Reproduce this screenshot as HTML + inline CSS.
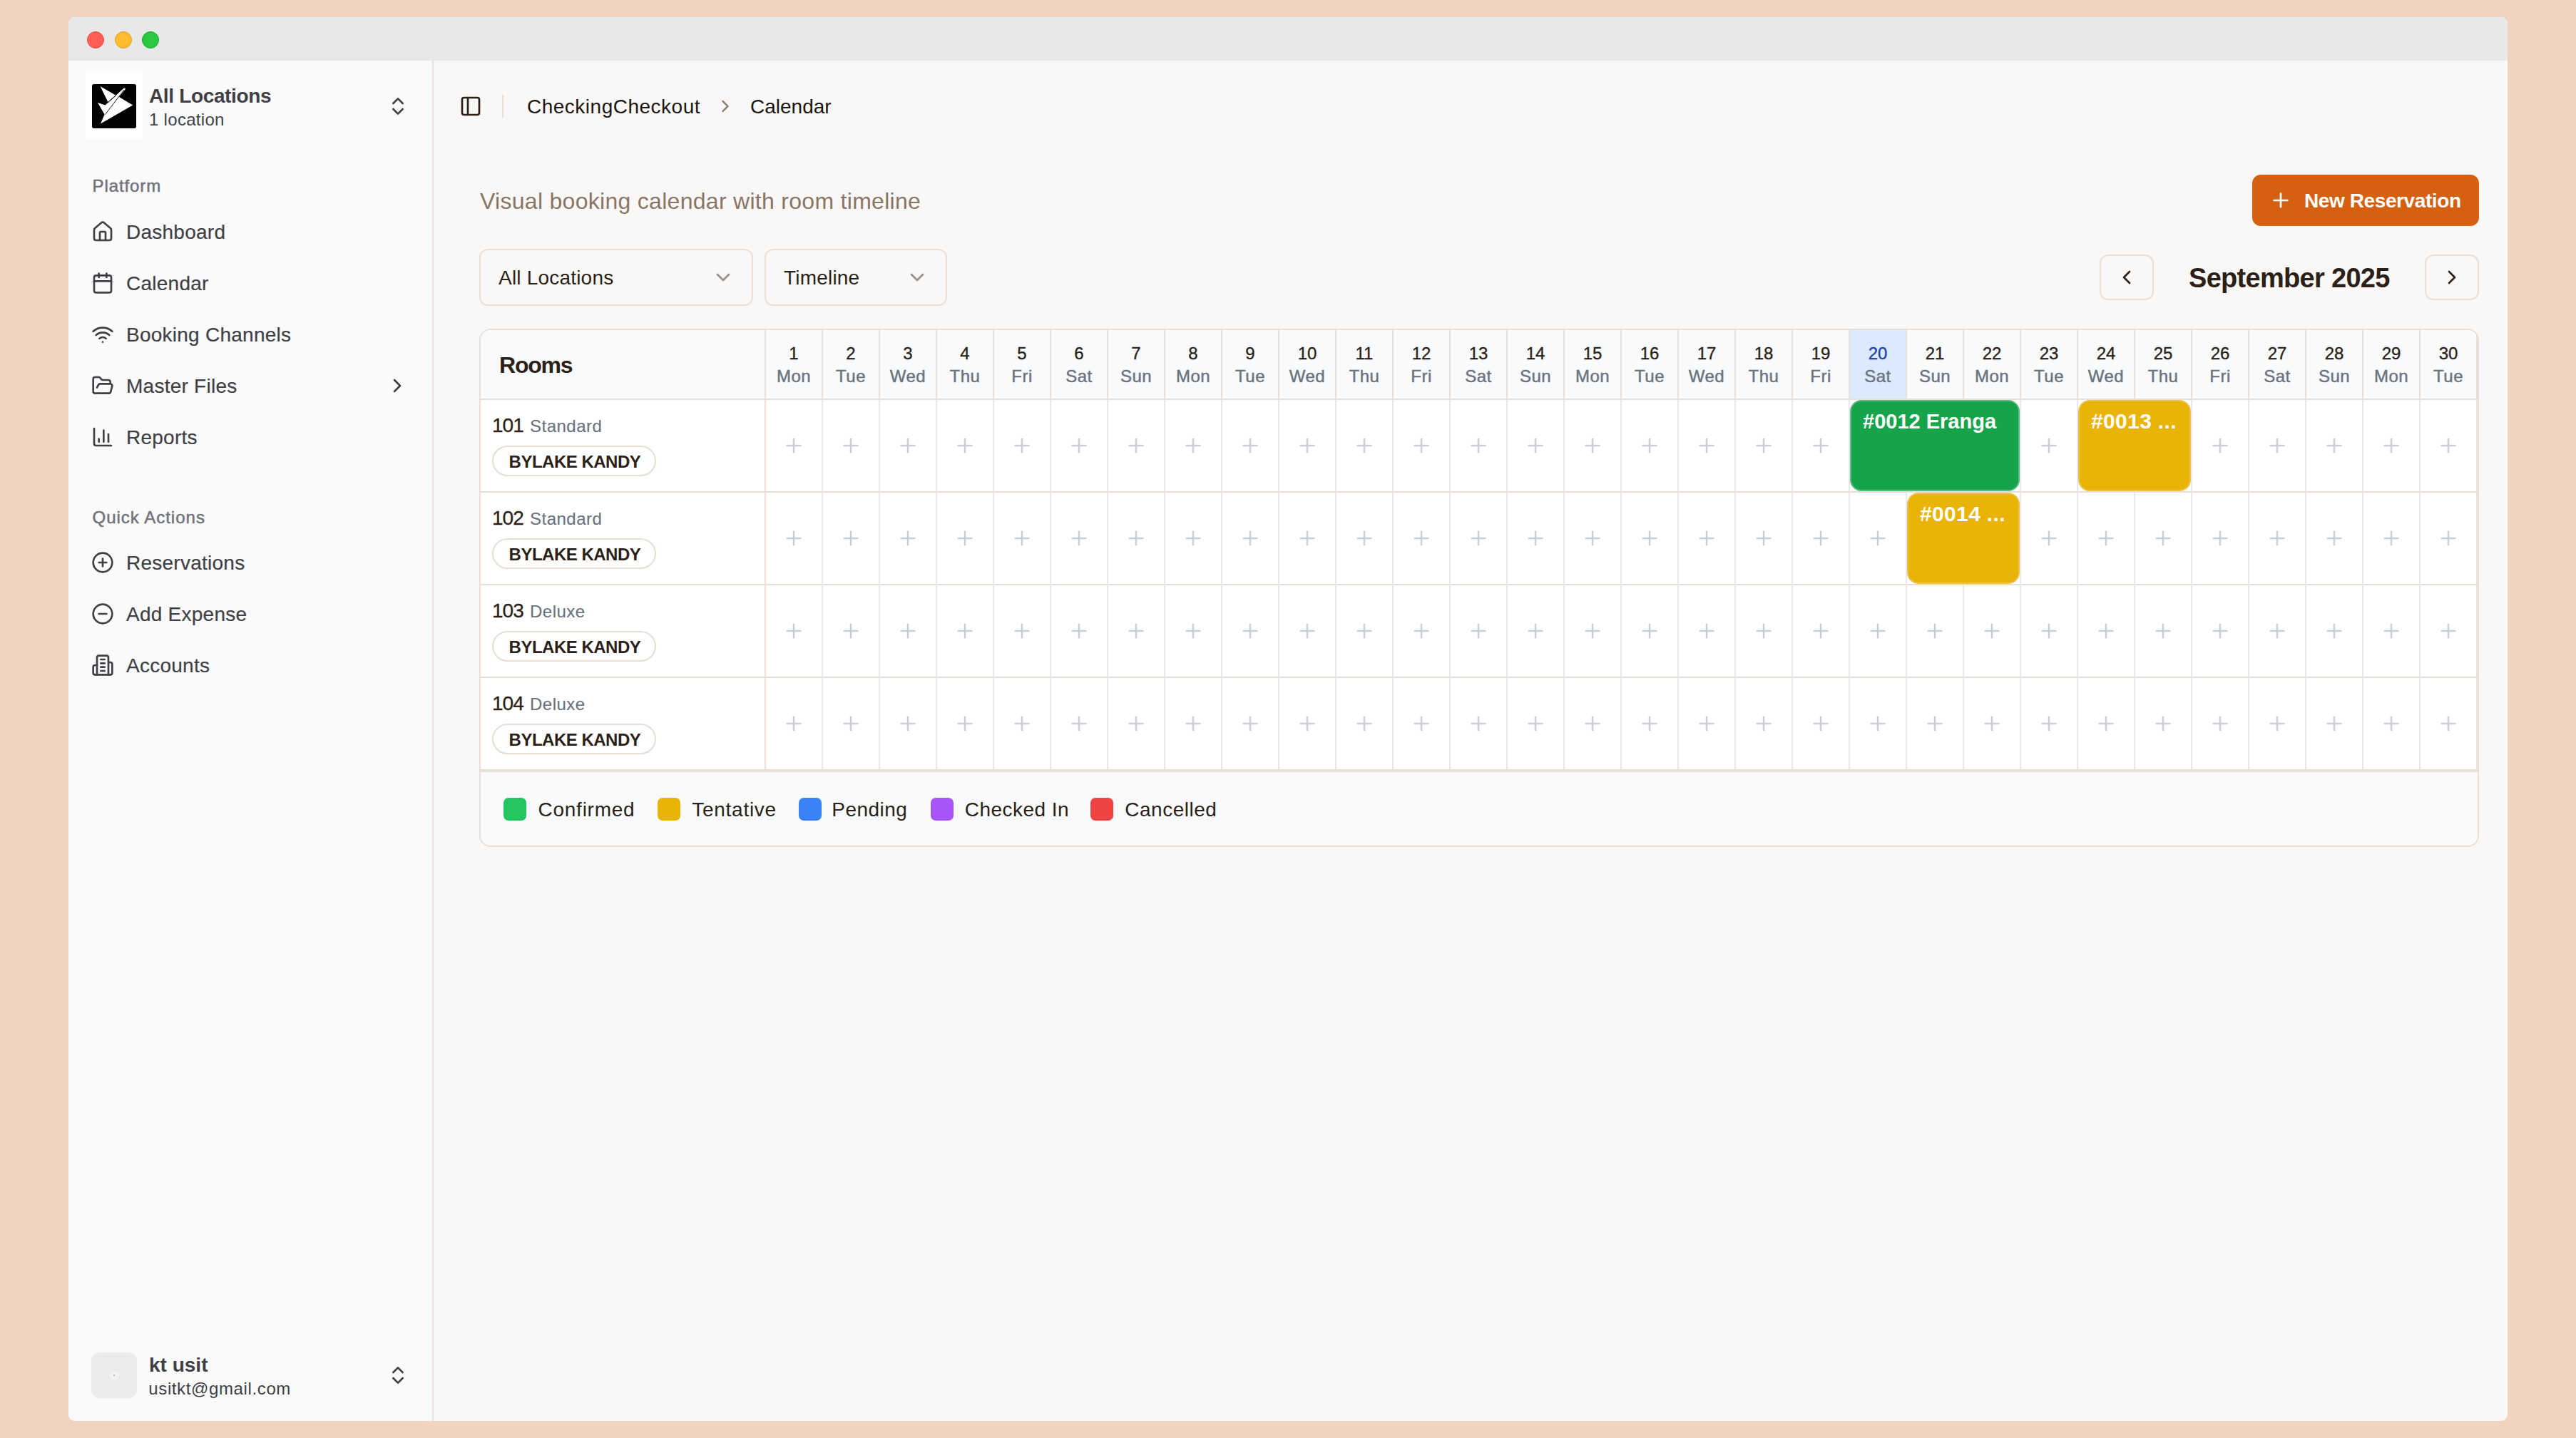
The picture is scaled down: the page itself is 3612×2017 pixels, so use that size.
<!DOCTYPE html><html><head><meta charset='utf-8'><style>
*{box-sizing:border-box;margin:0;padding:0}
html,body{width:3612px;height:2017px;overflow:hidden;background:#F2D3C1;font-family:"Liberation Sans",sans-serif}
.a{position:absolute}
.t{position:absolute;line-height:1;white-space:nowrap}
svg.i{position:absolute;fill:none;stroke:currentColor;stroke-linecap:round;stroke-linejoin:round;overflow:visible}
#win{position:absolute;left:96px;top:24px;width:3420px;height:1969px;border-radius:9px;overflow:hidden;background:#F9F8F7}
#titlebar{position:absolute;left:0;top:0;width:3420px;height:61px;background:#E8E8E8}
.dot{position:absolute;top:20px;width:24px;height:24px;border-radius:50%}
#sidebar{position:absolute;left:0;top:61px;width:512px;height:1908px;background:#FAFAFA;border-right:2px solid #EAE3DD}
</style></head><body>
<div id='win'>
<div id='titlebar'>
<div class='dot' style='left:26.2px;top:20px;background:#FF5F57;border:1px solid #E5493F'></div>
<div class='dot' style='left:64.8px;top:20px;background:#FEBC2E;border:1px solid #E1A024'></div>
<div class='dot' style='left:103px;top:20px;background:#28C840;border:1px solid #19A92E'></div>
</div>
<div id='sidebar'></div>
</div>
<div class='a' style='left:120px;top:101px;width:80px;height:95px;background:#FFFFFF'></div>
<div class='a' style='left:129px;top:118px;width:62px;height:62px;background:#000;border-radius:3px;overflow:hidden'><svg width='62' height='62' viewBox='0 0 62 62' style='position:absolute;left:0;top:0'><path d='M11.5 3 L33 15.4 L22.4 25 Z' fill='#fff'/><path d='M8 26 L18.5 29.5 L44.5 5.8 Q47.5 4.5 46.5 7.5 L38 18 L57.2 29.5 L12 55.5 L17.6 42.6 Z' fill='#fff'/><path d='M18.5 42.5 L45 8' stroke='#000' stroke-width='0.9' fill='none'/><path d='M22.5 25.8 L33.5 16' stroke='#000' stroke-width='0.9' fill='none'/></svg></div>
<div class='t' style='left:209px;top:121.30px;font-size:28px;color:#3F3F46;font-weight:700;letter-spacing:-0.35px;'>All Locations</div>
<div class='t' style='left:209px;top:155.68px;font-size:24px;color:#3F3F46;font-weight:400;letter-spacing:0.3px;'>1 location</div>
<svg class='i' style='left:542.0px;top:133.0px;width:32px;height:32px;color:#3F3F46;' viewBox='0 0 24 24' stroke-width='2'><path d="m7 15 5 5 5-5"/><path d="m7 9 5-5 5 5"/></svg>
<div class='t' style='left:129.5px;top:249.28px;font-size:24px;color:#71717A;font-weight:400;letter-spacing:0.9px;-webkit-text-stroke:0.5px currentColor;'>Platform</div>
<svg class='i' style='left:127.5px;top:309.0px;width:32px;height:32px;color:#3F3F46;' viewBox='0 0 24 24' stroke-width='2'><path d="M15 21v-8a1 1 0 0 0-1-1h-4a1 1 0 0 0-1 1v8"/><path d="M3 10a2 2 0 0 1 .709-1.528l7-5.999a2 2 0 0 1 2.582 0l7 5.999A2 2 0 0 1 21 10v9a2 2 0 0 1-2 2H5a2 2 0 0 1-2-2z"/></svg>
<div class='t' style='left:177px;top:312.30px;font-size:28px;color:#3F3F46;font-weight:400;letter-spacing:0.25px;-webkit-text-stroke:0.2px currentColor;'>Dashboard</div>
<svg class='i' style='left:127.5px;top:381.0px;width:32px;height:32px;color:#3F3F46;' viewBox='0 0 24 24' stroke-width='2'><path d="M8 2v4"/><path d="M16 2v4"/><rect width="18" height="18" x="3" y="4" rx="2"/><path d="M3 10h18"/></svg>
<div class='t' style='left:177px;top:384.30px;font-size:28px;color:#3F3F46;font-weight:400;letter-spacing:0.25px;-webkit-text-stroke:0.2px currentColor;'>Calendar</div>
<svg class='i' style='left:127.5px;top:453.0px;width:32px;height:32px;color:#3F3F46;' viewBox='0 0 24 24' stroke-width='2'><path d="M12 20h.01"/><path d="M2 8.82a15 15 0 0 1 20 0"/><path d="M5 12.859a10 10 0 0 1 14 0"/><path d="M8.5 16.429a5 5 0 0 1 7 0"/></svg>
<div class='t' style='left:177px;top:456.30px;font-size:28px;color:#3F3F46;font-weight:400;letter-spacing:0.25px;-webkit-text-stroke:0.2px currentColor;'>Booking Channels</div>
<svg class='i' style='left:127.5px;top:525.0px;width:32px;height:32px;color:#3F3F46;' viewBox='0 0 24 24' stroke-width='2'><path d="m6 14 1.5-2.9A2 2 0 0 1 9.24 10H20a2 2 0 0 1 1.94 2.5l-1.54 6a2 2 0 0 1-1.95 1.5H4a2 2 0 0 1-2-2V5a2 2 0 0 1 2-2h3.9a2 2 0 0 1 1.69.9l.81 1.2a2 2 0 0 0 1.67.9H18a2 2 0 0 1 2 2v2"/></svg>
<div class='t' style='left:177px;top:528.30px;font-size:28px;color:#3F3F46;font-weight:400;letter-spacing:0.25px;-webkit-text-stroke:0.2px currentColor;'>Master Files</div>
<svg class='i' style='left:127.5px;top:597.0px;width:32px;height:32px;color:#3F3F46;' viewBox='0 0 24 24' stroke-width='2'><path d="M3 3v16a2 2 0 0 0 2 2h16"/><path d="M18 17V9"/><path d="M13 17V5"/><path d="M8 17v-3"/></svg>
<div class='t' style='left:177px;top:600.30px;font-size:28px;color:#3F3F46;font-weight:400;letter-spacing:0.25px;-webkit-text-stroke:0.2px currentColor;'>Reports</div>
<svg class='i' style='left:541.0px;top:525.0px;width:32px;height:32px;color:#3F3F46;' viewBox='0 0 24 24' stroke-width='2'><path d="m9 18 6-6-6-6"/></svg>
<div class='t' style='left:129.5px;top:713.88px;font-size:24px;color:#71717A;font-weight:400;letter-spacing:1.0px;-webkit-text-stroke:0.5px currentColor;'>Quick Actions</div>
<svg class='i' style='left:127.5px;top:773.0px;width:32px;height:32px;color:#3F3F46;' viewBox='0 0 24 24' stroke-width='2'><circle cx="12" cy="12" r="10"/><path d="M8 12h8"/><path d="M12 8v8"/></svg>
<div class='t' style='left:177px;top:776.30px;font-size:28px;color:#3F3F46;font-weight:400;letter-spacing:0.25px;-webkit-text-stroke:0.2px currentColor;'>Reservations</div>
<svg class='i' style='left:127.5px;top:845.0px;width:32px;height:32px;color:#3F3F46;' viewBox='0 0 24 24' stroke-width='2'><circle cx="12" cy="12" r="10"/><path d="M8 12h8"/></svg>
<div class='t' style='left:177px;top:848.30px;font-size:28px;color:#3F3F46;font-weight:400;letter-spacing:0.25px;-webkit-text-stroke:0.2px currentColor;'>Add Expense</div>
<svg class='i' style='left:127.5px;top:917.0px;width:32px;height:32px;color:#3F3F46;' viewBox='0 0 24 24' stroke-width='2'><path d="M6 22V4a2 2 0 0 1 2-2h8a2 2 0 0 1 2 2v18Z"/><path d="M6 12H4a2 2 0 0 0-2 2v6a2 2 0 0 0 2 2h2"/><path d="M18 9h2a2 2 0 0 1 2 2v9a2 2 0 0 1-2 2h-2"/><path d="M10 6h4"/><path d="M10 10h4"/><path d="M10 14h4"/><path d="M10 18h4"/></svg>
<div class='t' style='left:177px;top:920.30px;font-size:28px;color:#3F3F46;font-weight:400;letter-spacing:0.25px;-webkit-text-stroke:0.2px currentColor;'>Accounts</div>
<div class='a' style='left:128px;top:1897px;width:64px;height:64px;border-radius:12px;background:#EBEBEB'></div>
<div class='a' style='left:153.5px;top:1922.5px;width:13px;height:13px;border-radius:50%;background:#F2F2F2'></div><div class='a' style='left:158.8px;top:1927.8px;width:2.4px;height:2.4px;border-radius:50%;background:#9A9A9A'></div>
<div class='t' style='left:209px;top:1901.30px;font-size:28px;color:#3F3F46;font-weight:700;'>kt usit</div>
<div class='t' style='left:208.3px;top:1935.68px;font-size:24px;color:#3F3F46;font-weight:400;letter-spacing:0.62px;'>usitkt@gmail.com</div>
<svg class='i' style='left:542.0px;top:1913.0px;width:32px;height:32px;color:#3F3F46;' viewBox='0 0 24 24' stroke-width='2'><path d="m7 15 5 5 5-5"/><path d="m7 9 5-5 5 5"/></svg>
<svg class='i' style='left:644.0px;top:133.0px;width:32px;height:32px;color:#2B1F18;' viewBox='0 0 24 24' stroke-width='2'><rect width="18" height="18" x="3" y="3" rx="2"/><path d="M9 3v18"/></svg>
<div class='a' style='left:704px;top:133px;width:2px;height:32px;background:#E8E0D8'></div>
<div class='t' style='left:739px;top:135.70px;font-size:28px;color:#1C1512;font-weight:400;letter-spacing:0.5px;'>CheckingCheckout</div>
<svg class='i' style='left:1003.0px;top:135.0px;width:28px;height:28px;color:#8B7768;' viewBox='0 0 24 24' stroke-width='2'><path d="m9 18 6-6-6-6"/></svg>
<div class='t' style='left:1052px;top:135.70px;font-size:28px;color:#1C1512;font-weight:400;'>Calendar</div>
<div class='t' style='left:673px;top:266.41px;font-size:32px;color:#8A7565;font-weight:400;letter-spacing:0.29px;'>Visual booking calendar with room timeline</div>
<div class='a' style='left:672px;top:349px;width:384px;height:80px;border:2px solid #E8E0D9;border-radius:12px'></div>
<div class='t' style='left:699px;top:376.30px;font-size:28px;color:#2B1F18;font-weight:400;letter-spacing:0.2px;'>All Locations</div>
<svg class='i' style='left:998.0px;top:373.0px;width:32px;height:32px;color:#9A9088;' viewBox='0 0 24 24' stroke-width='2'><path d="m6 9 6 6 6-6"/></svg>
<div class='a' style='left:1072px;top:349px;width:256px;height:80px;border:2px solid #E8E0D9;border-radius:12px'></div>
<div class='t' style='left:1099px;top:376.30px;font-size:28px;color:#2B1F18;font-weight:400;letter-spacing:0.2px;'>Timeline</div>
<svg class='i' style='left:1269.5px;top:373.0px;width:32px;height:32px;color:#9A9088;' viewBox='0 0 24 24' stroke-width='2'><path d="m6 9 6 6 6-6"/></svg>
<div class='a' style='left:3158px;top:245px;width:318px;height:72px;border-radius:12px;background:#D5600F'></div>
<svg class='i' style='left:3182.0px;top:265.0px;width:32px;height:32px;color:#FFFFFF;' viewBox='0 0 24 24' stroke-width='2'><path d="M5 12h14"/><path d="M12 5v14"/></svg>
<div class='t' style='left:3231px;top:268.30px;font-size:28px;color:#FFFFFF;font-weight:700;letter-spacing:-0.4px;'>New Reservation</div>
<div class='a' style='left:2944px;top:357px;width:76px;height:64px;border:2px solid #E8E0D9;border-radius:12px'></div>
<div class='a' style='left:3400px;top:357px;width:76px;height:64px;border:2px solid #E8E0D9;border-radius:12px'></div>
<svg class='i' style='left:2966.0px;top:373.0px;width:32px;height:32px;color:#2B1F18;' viewBox='0 0 24 24' stroke-width='2'><path d="m15 18-6-6 6-6"/></svg>
<svg class='i' style='left:3422.0px;top:373.0px;width:32px;height:32px;color:#2B1F18;' viewBox='0 0 24 24' stroke-width='2'><path d="m9 18 6-6-6-6"/></svg>
<div class='t' style='left:3069px;top:370.83px;font-size:38px;color:#2B1F18;font-weight:700;letter-spacing:-0.7px;'>September 2025</div>
<div class='a' style='left:672px;top:461px;width:2804px;height:727px;border:2px solid #E8E0D8;border-radius:16px;overflow:hidden;background:#FFFFFF'><div class='a' style='left:0px;top:0px;width:2800px;height:96px;background:#F8FAFC;'></div><div class='a' style='left:1920px;top:0px;width:78px;height:96px;background:#DBEAFE;'></div><div class='a' style='left:398px;top:0px;width:2px;height:616px;background:#E8E0D8;'></div><div class='a' style='left:478px;top:0px;width:2px;height:96px;background:#E8E0D8;'></div><div class='a' style='left:478px;top:98px;width:2px;height:518px;background:#E5E7EB;'></div><div class='a' style='left:558px;top:0px;width:2px;height:96px;background:#E8E0D8;'></div><div class='a' style='left:558px;top:98px;width:2px;height:518px;background:#E5E7EB;'></div><div class='a' style='left:638px;top:0px;width:2px;height:96px;background:#E8E0D8;'></div><div class='a' style='left:638px;top:98px;width:2px;height:518px;background:#E5E7EB;'></div><div class='a' style='left:718px;top:0px;width:2px;height:96px;background:#E8E0D8;'></div><div class='a' style='left:718px;top:98px;width:2px;height:518px;background:#E5E7EB;'></div><div class='a' style='left:798px;top:0px;width:2px;height:96px;background:#E8E0D8;'></div><div class='a' style='left:798px;top:98px;width:2px;height:518px;background:#E5E7EB;'></div><div class='a' style='left:878px;top:0px;width:2px;height:96px;background:#E8E0D8;'></div><div class='a' style='left:878px;top:98px;width:2px;height:518px;background:#E5E7EB;'></div><div class='a' style='left:958px;top:0px;width:2px;height:96px;background:#E8E0D8;'></div><div class='a' style='left:958px;top:98px;width:2px;height:518px;background:#E5E7EB;'></div><div class='a' style='left:1038px;top:0px;width:2px;height:96px;background:#E8E0D8;'></div><div class='a' style='left:1038px;top:98px;width:2px;height:518px;background:#E5E7EB;'></div><div class='a' style='left:1118px;top:0px;width:2px;height:96px;background:#E8E0D8;'></div><div class='a' style='left:1118px;top:98px;width:2px;height:518px;background:#E5E7EB;'></div><div class='a' style='left:1198px;top:0px;width:2px;height:96px;background:#E8E0D8;'></div><div class='a' style='left:1198px;top:98px;width:2px;height:518px;background:#E5E7EB;'></div><div class='a' style='left:1278px;top:0px;width:2px;height:96px;background:#E8E0D8;'></div><div class='a' style='left:1278px;top:98px;width:2px;height:518px;background:#E5E7EB;'></div><div class='a' style='left:1358px;top:0px;width:2px;height:96px;background:#E8E0D8;'></div><div class='a' style='left:1358px;top:98px;width:2px;height:518px;background:#E5E7EB;'></div><div class='a' style='left:1438px;top:0px;width:2px;height:96px;background:#E8E0D8;'></div><div class='a' style='left:1438px;top:98px;width:2px;height:518px;background:#E5E7EB;'></div><div class='a' style='left:1518px;top:0px;width:2px;height:96px;background:#E8E0D8;'></div><div class='a' style='left:1518px;top:98px;width:2px;height:518px;background:#E5E7EB;'></div><div class='a' style='left:1598px;top:0px;width:2px;height:96px;background:#E8E0D8;'></div><div class='a' style='left:1598px;top:98px;width:2px;height:518px;background:#E5E7EB;'></div><div class='a' style='left:1678px;top:0px;width:2px;height:96px;background:#E8E0D8;'></div><div class='a' style='left:1678px;top:98px;width:2px;height:518px;background:#E5E7EB;'></div><div class='a' style='left:1758px;top:0px;width:2px;height:96px;background:#E8E0D8;'></div><div class='a' style='left:1758px;top:98px;width:2px;height:518px;background:#E5E7EB;'></div><div class='a' style='left:1838px;top:0px;width:2px;height:96px;background:#E8E0D8;'></div><div class='a' style='left:1838px;top:98px;width:2px;height:518px;background:#E5E7EB;'></div><div class='a' style='left:1918px;top:0px;width:2px;height:96px;background:#E8E0D8;'></div><div class='a' style='left:1918px;top:98px;width:2px;height:518px;background:#E5E7EB;'></div><div class='a' style='left:1998px;top:0px;width:2px;height:96px;background:#E8E0D8;'></div><div class='a' style='left:1998px;top:98px;width:2px;height:518px;background:#E5E7EB;'></div><div class='a' style='left:2078px;top:0px;width:2px;height:96px;background:#E8E0D8;'></div><div class='a' style='left:2078px;top:98px;width:2px;height:518px;background:#E5E7EB;'></div><div class='a' style='left:2158px;top:0px;width:2px;height:96px;background:#E8E0D8;'></div><div class='a' style='left:2158px;top:98px;width:2px;height:518px;background:#E5E7EB;'></div><div class='a' style='left:2238px;top:0px;width:2px;height:96px;background:#E8E0D8;'></div><div class='a' style='left:2238px;top:98px;width:2px;height:518px;background:#E5E7EB;'></div><div class='a' style='left:2318px;top:0px;width:2px;height:96px;background:#E8E0D8;'></div><div class='a' style='left:2318px;top:98px;width:2px;height:518px;background:#E5E7EB;'></div><div class='a' style='left:2398px;top:0px;width:2px;height:96px;background:#E8E0D8;'></div><div class='a' style='left:2398px;top:98px;width:2px;height:518px;background:#E5E7EB;'></div><div class='a' style='left:2478px;top:0px;width:2px;height:96px;background:#E8E0D8;'></div><div class='a' style='left:2478px;top:98px;width:2px;height:518px;background:#E5E7EB;'></div><div class='a' style='left:2558px;top:0px;width:2px;height:96px;background:#E8E0D8;'></div><div class='a' style='left:2558px;top:98px;width:2px;height:518px;background:#E5E7EB;'></div><div class='a' style='left:2638px;top:0px;width:2px;height:96px;background:#E8E0D8;'></div><div class='a' style='left:2638px;top:98px;width:2px;height:518px;background:#E5E7EB;'></div><div class='a' style='left:2718px;top:0px;width:2px;height:96px;background:#E8E0D8;'></div><div class='a' style='left:2718px;top:98px;width:2px;height:518px;background:#E5E7EB;'></div><div class='a' style='left:2798px;top:0px;width:2px;height:96px;background:#E8E0D8;'></div><div class='a' style='left:2798px;top:98px;width:2px;height:518px;background:#E5E7EB;'></div><div class='a' style='left:0px;top:96px;width:2800px;height:2px;background:#E8E0D8;'></div><div class='a' style='left:0px;top:226px;width:2800px;height:2px;background:#E8E0D8;'></div><div class='a' style='left:0px;top:356px;width:2800px;height:2px;background:#E8E0D8;'></div><div class='a' style='left:0px;top:486px;width:2800px;height:2px;background:#E8E0D8;'></div><div class='a' style='left:0px;top:616px;width:2800px;height:4px;background:#E8E0D8;'></div><div class='a' style='left:0px;top:620px;width:2800px;height:105px;background:#F8FAFC;'></div></div>
<div class='t' style='left:1073.0px;width:80px;text-align:center;top:483.68px;font-size:24px;color:#2B1F18;font-weight:400;-webkit-text-stroke:0.35px currentColor;'>1</div>
<div class='t' style='left:1073.0px;width:80px;text-align:center;top:515.68px;font-size:24px;color:#6B7280;font-weight:400;letter-spacing:0.5px;-webkit-text-stroke:0.45px currentColor;'>Mon</div>
<div class='t' style='left:1153.0px;width:80px;text-align:center;top:483.68px;font-size:24px;color:#2B1F18;font-weight:400;-webkit-text-stroke:0.35px currentColor;'>2</div>
<div class='t' style='left:1153.0px;width:80px;text-align:center;top:515.68px;font-size:24px;color:#6B7280;font-weight:400;letter-spacing:0.5px;-webkit-text-stroke:0.45px currentColor;'>Tue</div>
<div class='t' style='left:1233.0px;width:80px;text-align:center;top:483.68px;font-size:24px;color:#2B1F18;font-weight:400;-webkit-text-stroke:0.35px currentColor;'>3</div>
<div class='t' style='left:1233.0px;width:80px;text-align:center;top:515.68px;font-size:24px;color:#6B7280;font-weight:400;letter-spacing:0.5px;-webkit-text-stroke:0.45px currentColor;'>Wed</div>
<div class='t' style='left:1313.0px;width:80px;text-align:center;top:483.68px;font-size:24px;color:#2B1F18;font-weight:400;-webkit-text-stroke:0.35px currentColor;'>4</div>
<div class='t' style='left:1313.0px;width:80px;text-align:center;top:515.68px;font-size:24px;color:#6B7280;font-weight:400;letter-spacing:0.5px;-webkit-text-stroke:0.45px currentColor;'>Thu</div>
<div class='t' style='left:1393.0px;width:80px;text-align:center;top:483.68px;font-size:24px;color:#2B1F18;font-weight:400;-webkit-text-stroke:0.35px currentColor;'>5</div>
<div class='t' style='left:1393.0px;width:80px;text-align:center;top:515.68px;font-size:24px;color:#6B7280;font-weight:400;letter-spacing:0.5px;-webkit-text-stroke:0.45px currentColor;'>Fri</div>
<div class='t' style='left:1473.0px;width:80px;text-align:center;top:483.68px;font-size:24px;color:#2B1F18;font-weight:400;-webkit-text-stroke:0.35px currentColor;'>6</div>
<div class='t' style='left:1473.0px;width:80px;text-align:center;top:515.68px;font-size:24px;color:#6B7280;font-weight:400;letter-spacing:0.5px;-webkit-text-stroke:0.45px currentColor;'>Sat</div>
<div class='t' style='left:1553.0px;width:80px;text-align:center;top:483.68px;font-size:24px;color:#2B1F18;font-weight:400;-webkit-text-stroke:0.35px currentColor;'>7</div>
<div class='t' style='left:1553.0px;width:80px;text-align:center;top:515.68px;font-size:24px;color:#6B7280;font-weight:400;letter-spacing:0.5px;-webkit-text-stroke:0.45px currentColor;'>Sun</div>
<div class='t' style='left:1633.0px;width:80px;text-align:center;top:483.68px;font-size:24px;color:#2B1F18;font-weight:400;-webkit-text-stroke:0.35px currentColor;'>8</div>
<div class='t' style='left:1633.0px;width:80px;text-align:center;top:515.68px;font-size:24px;color:#6B7280;font-weight:400;letter-spacing:0.5px;-webkit-text-stroke:0.45px currentColor;'>Mon</div>
<div class='t' style='left:1713.0px;width:80px;text-align:center;top:483.68px;font-size:24px;color:#2B1F18;font-weight:400;-webkit-text-stroke:0.35px currentColor;'>9</div>
<div class='t' style='left:1713.0px;width:80px;text-align:center;top:515.68px;font-size:24px;color:#6B7280;font-weight:400;letter-spacing:0.5px;-webkit-text-stroke:0.45px currentColor;'>Tue</div>
<div class='t' style='left:1793.0px;width:80px;text-align:center;top:483.68px;font-size:24px;color:#2B1F18;font-weight:400;-webkit-text-stroke:0.35px currentColor;'>10</div>
<div class='t' style='left:1793.0px;width:80px;text-align:center;top:515.68px;font-size:24px;color:#6B7280;font-weight:400;letter-spacing:0.5px;-webkit-text-stroke:0.45px currentColor;'>Wed</div>
<div class='t' style='left:1873.0px;width:80px;text-align:center;top:483.68px;font-size:24px;color:#2B1F18;font-weight:400;-webkit-text-stroke:0.35px currentColor;'>11</div>
<div class='t' style='left:1873.0px;width:80px;text-align:center;top:515.68px;font-size:24px;color:#6B7280;font-weight:400;letter-spacing:0.5px;-webkit-text-stroke:0.45px currentColor;'>Thu</div>
<div class='t' style='left:1953.0px;width:80px;text-align:center;top:483.68px;font-size:24px;color:#2B1F18;font-weight:400;-webkit-text-stroke:0.35px currentColor;'>12</div>
<div class='t' style='left:1953.0px;width:80px;text-align:center;top:515.68px;font-size:24px;color:#6B7280;font-weight:400;letter-spacing:0.5px;-webkit-text-stroke:0.45px currentColor;'>Fri</div>
<div class='t' style='left:2033.0px;width:80px;text-align:center;top:483.68px;font-size:24px;color:#2B1F18;font-weight:400;-webkit-text-stroke:0.35px currentColor;'>13</div>
<div class='t' style='left:2033.0px;width:80px;text-align:center;top:515.68px;font-size:24px;color:#6B7280;font-weight:400;letter-spacing:0.5px;-webkit-text-stroke:0.45px currentColor;'>Sat</div>
<div class='t' style='left:2113.0px;width:80px;text-align:center;top:483.68px;font-size:24px;color:#2B1F18;font-weight:400;-webkit-text-stroke:0.35px currentColor;'>14</div>
<div class='t' style='left:2113.0px;width:80px;text-align:center;top:515.68px;font-size:24px;color:#6B7280;font-weight:400;letter-spacing:0.5px;-webkit-text-stroke:0.45px currentColor;'>Sun</div>
<div class='t' style='left:2193.0px;width:80px;text-align:center;top:483.68px;font-size:24px;color:#2B1F18;font-weight:400;-webkit-text-stroke:0.35px currentColor;'>15</div>
<div class='t' style='left:2193.0px;width:80px;text-align:center;top:515.68px;font-size:24px;color:#6B7280;font-weight:400;letter-spacing:0.5px;-webkit-text-stroke:0.45px currentColor;'>Mon</div>
<div class='t' style='left:2273.0px;width:80px;text-align:center;top:483.68px;font-size:24px;color:#2B1F18;font-weight:400;-webkit-text-stroke:0.35px currentColor;'>16</div>
<div class='t' style='left:2273.0px;width:80px;text-align:center;top:515.68px;font-size:24px;color:#6B7280;font-weight:400;letter-spacing:0.5px;-webkit-text-stroke:0.45px currentColor;'>Tue</div>
<div class='t' style='left:2353.0px;width:80px;text-align:center;top:483.68px;font-size:24px;color:#2B1F18;font-weight:400;-webkit-text-stroke:0.35px currentColor;'>17</div>
<div class='t' style='left:2353.0px;width:80px;text-align:center;top:515.68px;font-size:24px;color:#6B7280;font-weight:400;letter-spacing:0.5px;-webkit-text-stroke:0.45px currentColor;'>Wed</div>
<div class='t' style='left:2433.0px;width:80px;text-align:center;top:483.68px;font-size:24px;color:#2B1F18;font-weight:400;-webkit-text-stroke:0.35px currentColor;'>18</div>
<div class='t' style='left:2433.0px;width:80px;text-align:center;top:515.68px;font-size:24px;color:#6B7280;font-weight:400;letter-spacing:0.5px;-webkit-text-stroke:0.45px currentColor;'>Thu</div>
<div class='t' style='left:2513.0px;width:80px;text-align:center;top:483.68px;font-size:24px;color:#2B1F18;font-weight:400;-webkit-text-stroke:0.35px currentColor;'>19</div>
<div class='t' style='left:2513.0px;width:80px;text-align:center;top:515.68px;font-size:24px;color:#6B7280;font-weight:400;letter-spacing:0.5px;-webkit-text-stroke:0.45px currentColor;'>Fri</div>
<div class='t' style='left:2593.0px;width:80px;text-align:center;top:483.68px;font-size:24px;color:#1E40AF;font-weight:400;-webkit-text-stroke:0.35px currentColor;'>20</div>
<div class='t' style='left:2593.0px;width:80px;text-align:center;top:515.68px;font-size:24px;color:#6B7280;font-weight:400;letter-spacing:0.5px;-webkit-text-stroke:0.45px currentColor;'>Sat</div>
<div class='t' style='left:2673.0px;width:80px;text-align:center;top:483.68px;font-size:24px;color:#2B1F18;font-weight:400;-webkit-text-stroke:0.35px currentColor;'>21</div>
<div class='t' style='left:2673.0px;width:80px;text-align:center;top:515.68px;font-size:24px;color:#6B7280;font-weight:400;letter-spacing:0.5px;-webkit-text-stroke:0.45px currentColor;'>Sun</div>
<div class='t' style='left:2753.0px;width:80px;text-align:center;top:483.68px;font-size:24px;color:#2B1F18;font-weight:400;-webkit-text-stroke:0.35px currentColor;'>22</div>
<div class='t' style='left:2753.0px;width:80px;text-align:center;top:515.68px;font-size:24px;color:#6B7280;font-weight:400;letter-spacing:0.5px;-webkit-text-stroke:0.45px currentColor;'>Mon</div>
<div class='t' style='left:2833.0px;width:80px;text-align:center;top:483.68px;font-size:24px;color:#2B1F18;font-weight:400;-webkit-text-stroke:0.35px currentColor;'>23</div>
<div class='t' style='left:2833.0px;width:80px;text-align:center;top:515.68px;font-size:24px;color:#6B7280;font-weight:400;letter-spacing:0.5px;-webkit-text-stroke:0.45px currentColor;'>Tue</div>
<div class='t' style='left:2913.0px;width:80px;text-align:center;top:483.68px;font-size:24px;color:#2B1F18;font-weight:400;-webkit-text-stroke:0.35px currentColor;'>24</div>
<div class='t' style='left:2913.0px;width:80px;text-align:center;top:515.68px;font-size:24px;color:#6B7280;font-weight:400;letter-spacing:0.5px;-webkit-text-stroke:0.45px currentColor;'>Wed</div>
<div class='t' style='left:2993.0px;width:80px;text-align:center;top:483.68px;font-size:24px;color:#2B1F18;font-weight:400;-webkit-text-stroke:0.35px currentColor;'>25</div>
<div class='t' style='left:2993.0px;width:80px;text-align:center;top:515.68px;font-size:24px;color:#6B7280;font-weight:400;letter-spacing:0.5px;-webkit-text-stroke:0.45px currentColor;'>Thu</div>
<div class='t' style='left:3073.0px;width:80px;text-align:center;top:483.68px;font-size:24px;color:#2B1F18;font-weight:400;-webkit-text-stroke:0.35px currentColor;'>26</div>
<div class='t' style='left:3073.0px;width:80px;text-align:center;top:515.68px;font-size:24px;color:#6B7280;font-weight:400;letter-spacing:0.5px;-webkit-text-stroke:0.45px currentColor;'>Fri</div>
<div class='t' style='left:3153.0px;width:80px;text-align:center;top:483.68px;font-size:24px;color:#2B1F18;font-weight:400;-webkit-text-stroke:0.35px currentColor;'>27</div>
<div class='t' style='left:3153.0px;width:80px;text-align:center;top:515.68px;font-size:24px;color:#6B7280;font-weight:400;letter-spacing:0.5px;-webkit-text-stroke:0.45px currentColor;'>Sat</div>
<div class='t' style='left:3233.0px;width:80px;text-align:center;top:483.68px;font-size:24px;color:#2B1F18;font-weight:400;-webkit-text-stroke:0.35px currentColor;'>28</div>
<div class='t' style='left:3233.0px;width:80px;text-align:center;top:515.68px;font-size:24px;color:#6B7280;font-weight:400;letter-spacing:0.5px;-webkit-text-stroke:0.45px currentColor;'>Sun</div>
<div class='t' style='left:3313.0px;width:80px;text-align:center;top:483.68px;font-size:24px;color:#2B1F18;font-weight:400;-webkit-text-stroke:0.35px currentColor;'>29</div>
<div class='t' style='left:3313.0px;width:80px;text-align:center;top:515.68px;font-size:24px;color:#6B7280;font-weight:400;letter-spacing:0.5px;-webkit-text-stroke:0.45px currentColor;'>Mon</div>
<div class='t' style='left:3393.0px;width:80px;text-align:center;top:483.68px;font-size:24px;color:#2B1F18;font-weight:400;-webkit-text-stroke:0.35px currentColor;'>30</div>
<div class='t' style='left:3393.0px;width:80px;text-align:center;top:515.68px;font-size:24px;color:#6B7280;font-weight:400;letter-spacing:0.5px;-webkit-text-stroke:0.45px currentColor;'>Tue</div>
<div class='t' style='left:700px;top:495.91px;font-size:32px;color:#2B1F18;font-weight:700;letter-spacing:-1.2px;'>Rooms</div>
<div class='t' style='left:690px;top:582.80px;font-size:28px;color:#2B1F18;font-weight:400;letter-spacing:-1.0px;-webkit-text-stroke:0.3px currentColor;'>101</div>
<div class='t' style='left:743px;top:586.18px;font-size:24px;color:#6B7280;font-weight:400;letter-spacing:0.5px;-webkit-text-stroke:0.15px currentColor;'>Standard</div>
<div class='a' style='left:690px;top:625px;width:230px;height:43px;border:2px solid #E6DED6;border-radius:22px;background:#fff'></div>
<div class='t' style='left:713.6px;top:635.68px;font-size:24px;color:#2B1F18;font-weight:700;letter-spacing:-0.5px;'>BYLAKE KANDY</div>
<svg class='i' style='left:1097.0px;top:609.0px;width:32px;height:32px;color:#C9CED6;' viewBox='0 0 24 24' stroke-width='1.9'><path d="M5 12h14"/><path d="M12 5v14"/></svg>
<svg class='i' style='left:1177.0px;top:609.0px;width:32px;height:32px;color:#C9CED6;' viewBox='0 0 24 24' stroke-width='1.9'><path d="M5 12h14"/><path d="M12 5v14"/></svg>
<svg class='i' style='left:1257.0px;top:609.0px;width:32px;height:32px;color:#C9CED6;' viewBox='0 0 24 24' stroke-width='1.9'><path d="M5 12h14"/><path d="M12 5v14"/></svg>
<svg class='i' style='left:1337.0px;top:609.0px;width:32px;height:32px;color:#C9CED6;' viewBox='0 0 24 24' stroke-width='1.9'><path d="M5 12h14"/><path d="M12 5v14"/></svg>
<svg class='i' style='left:1417.0px;top:609.0px;width:32px;height:32px;color:#C9CED6;' viewBox='0 0 24 24' stroke-width='1.9'><path d="M5 12h14"/><path d="M12 5v14"/></svg>
<svg class='i' style='left:1497.0px;top:609.0px;width:32px;height:32px;color:#C9CED6;' viewBox='0 0 24 24' stroke-width='1.9'><path d="M5 12h14"/><path d="M12 5v14"/></svg>
<svg class='i' style='left:1577.0px;top:609.0px;width:32px;height:32px;color:#C9CED6;' viewBox='0 0 24 24' stroke-width='1.9'><path d="M5 12h14"/><path d="M12 5v14"/></svg>
<svg class='i' style='left:1657.0px;top:609.0px;width:32px;height:32px;color:#C9CED6;' viewBox='0 0 24 24' stroke-width='1.9'><path d="M5 12h14"/><path d="M12 5v14"/></svg>
<svg class='i' style='left:1737.0px;top:609.0px;width:32px;height:32px;color:#C9CED6;' viewBox='0 0 24 24' stroke-width='1.9'><path d="M5 12h14"/><path d="M12 5v14"/></svg>
<svg class='i' style='left:1817.0px;top:609.0px;width:32px;height:32px;color:#C9CED6;' viewBox='0 0 24 24' stroke-width='1.9'><path d="M5 12h14"/><path d="M12 5v14"/></svg>
<svg class='i' style='left:1897.0px;top:609.0px;width:32px;height:32px;color:#C9CED6;' viewBox='0 0 24 24' stroke-width='1.9'><path d="M5 12h14"/><path d="M12 5v14"/></svg>
<svg class='i' style='left:1977.0px;top:609.0px;width:32px;height:32px;color:#C9CED6;' viewBox='0 0 24 24' stroke-width='1.9'><path d="M5 12h14"/><path d="M12 5v14"/></svg>
<svg class='i' style='left:2057.0px;top:609.0px;width:32px;height:32px;color:#C9CED6;' viewBox='0 0 24 24' stroke-width='1.9'><path d="M5 12h14"/><path d="M12 5v14"/></svg>
<svg class='i' style='left:2137.0px;top:609.0px;width:32px;height:32px;color:#C9CED6;' viewBox='0 0 24 24' stroke-width='1.9'><path d="M5 12h14"/><path d="M12 5v14"/></svg>
<svg class='i' style='left:2217.0px;top:609.0px;width:32px;height:32px;color:#C9CED6;' viewBox='0 0 24 24' stroke-width='1.9'><path d="M5 12h14"/><path d="M12 5v14"/></svg>
<svg class='i' style='left:2297.0px;top:609.0px;width:32px;height:32px;color:#C9CED6;' viewBox='0 0 24 24' stroke-width='1.9'><path d="M5 12h14"/><path d="M12 5v14"/></svg>
<svg class='i' style='left:2377.0px;top:609.0px;width:32px;height:32px;color:#C9CED6;' viewBox='0 0 24 24' stroke-width='1.9'><path d="M5 12h14"/><path d="M12 5v14"/></svg>
<svg class='i' style='left:2457.0px;top:609.0px;width:32px;height:32px;color:#C9CED6;' viewBox='0 0 24 24' stroke-width='1.9'><path d="M5 12h14"/><path d="M12 5v14"/></svg>
<svg class='i' style='left:2537.0px;top:609.0px;width:32px;height:32px;color:#C9CED6;' viewBox='0 0 24 24' stroke-width='1.9'><path d="M5 12h14"/><path d="M12 5v14"/></svg>
<svg class='i' style='left:2857.0px;top:609.0px;width:32px;height:32px;color:#C9CED6;' viewBox='0 0 24 24' stroke-width='1.9'><path d="M5 12h14"/><path d="M12 5v14"/></svg>
<svg class='i' style='left:3097.0px;top:609.0px;width:32px;height:32px;color:#C9CED6;' viewBox='0 0 24 24' stroke-width='1.9'><path d="M5 12h14"/><path d="M12 5v14"/></svg>
<svg class='i' style='left:3177.0px;top:609.0px;width:32px;height:32px;color:#C9CED6;' viewBox='0 0 24 24' stroke-width='1.9'><path d="M5 12h14"/><path d="M12 5v14"/></svg>
<svg class='i' style='left:3257.0px;top:609.0px;width:32px;height:32px;color:#C9CED6;' viewBox='0 0 24 24' stroke-width='1.9'><path d="M5 12h14"/><path d="M12 5v14"/></svg>
<svg class='i' style='left:3337.0px;top:609.0px;width:32px;height:32px;color:#C9CED6;' viewBox='0 0 24 24' stroke-width='1.9'><path d="M5 12h14"/><path d="M12 5v14"/></svg>
<svg class='i' style='left:3417.0px;top:609.0px;width:32px;height:32px;color:#C9CED6;' viewBox='0 0 24 24' stroke-width='1.9'><path d="M5 12h14"/><path d="M12 5v14"/></svg>
<div class='t' style='left:690px;top:712.80px;font-size:28px;color:#2B1F18;font-weight:400;letter-spacing:-1.0px;-webkit-text-stroke:0.3px currentColor;'>102</div>
<div class='t' style='left:743px;top:716.18px;font-size:24px;color:#6B7280;font-weight:400;letter-spacing:0.5px;-webkit-text-stroke:0.15px currentColor;'>Standard</div>
<div class='a' style='left:690px;top:755px;width:230px;height:43px;border:2px solid #E6DED6;border-radius:22px;background:#fff'></div>
<div class='t' style='left:713.6px;top:765.68px;font-size:24px;color:#2B1F18;font-weight:700;letter-spacing:-0.5px;'>BYLAKE KANDY</div>
<svg class='i' style='left:1097.0px;top:739.0px;width:32px;height:32px;color:#C9CED6;' viewBox='0 0 24 24' stroke-width='1.9'><path d="M5 12h14"/><path d="M12 5v14"/></svg>
<svg class='i' style='left:1177.0px;top:739.0px;width:32px;height:32px;color:#C9CED6;' viewBox='0 0 24 24' stroke-width='1.9'><path d="M5 12h14"/><path d="M12 5v14"/></svg>
<svg class='i' style='left:1257.0px;top:739.0px;width:32px;height:32px;color:#C9CED6;' viewBox='0 0 24 24' stroke-width='1.9'><path d="M5 12h14"/><path d="M12 5v14"/></svg>
<svg class='i' style='left:1337.0px;top:739.0px;width:32px;height:32px;color:#C9CED6;' viewBox='0 0 24 24' stroke-width='1.9'><path d="M5 12h14"/><path d="M12 5v14"/></svg>
<svg class='i' style='left:1417.0px;top:739.0px;width:32px;height:32px;color:#C9CED6;' viewBox='0 0 24 24' stroke-width='1.9'><path d="M5 12h14"/><path d="M12 5v14"/></svg>
<svg class='i' style='left:1497.0px;top:739.0px;width:32px;height:32px;color:#C9CED6;' viewBox='0 0 24 24' stroke-width='1.9'><path d="M5 12h14"/><path d="M12 5v14"/></svg>
<svg class='i' style='left:1577.0px;top:739.0px;width:32px;height:32px;color:#C9CED6;' viewBox='0 0 24 24' stroke-width='1.9'><path d="M5 12h14"/><path d="M12 5v14"/></svg>
<svg class='i' style='left:1657.0px;top:739.0px;width:32px;height:32px;color:#C9CED6;' viewBox='0 0 24 24' stroke-width='1.9'><path d="M5 12h14"/><path d="M12 5v14"/></svg>
<svg class='i' style='left:1737.0px;top:739.0px;width:32px;height:32px;color:#C9CED6;' viewBox='0 0 24 24' stroke-width='1.9'><path d="M5 12h14"/><path d="M12 5v14"/></svg>
<svg class='i' style='left:1817.0px;top:739.0px;width:32px;height:32px;color:#C9CED6;' viewBox='0 0 24 24' stroke-width='1.9'><path d="M5 12h14"/><path d="M12 5v14"/></svg>
<svg class='i' style='left:1897.0px;top:739.0px;width:32px;height:32px;color:#C9CED6;' viewBox='0 0 24 24' stroke-width='1.9'><path d="M5 12h14"/><path d="M12 5v14"/></svg>
<svg class='i' style='left:1977.0px;top:739.0px;width:32px;height:32px;color:#C9CED6;' viewBox='0 0 24 24' stroke-width='1.9'><path d="M5 12h14"/><path d="M12 5v14"/></svg>
<svg class='i' style='left:2057.0px;top:739.0px;width:32px;height:32px;color:#C9CED6;' viewBox='0 0 24 24' stroke-width='1.9'><path d="M5 12h14"/><path d="M12 5v14"/></svg>
<svg class='i' style='left:2137.0px;top:739.0px;width:32px;height:32px;color:#C9CED6;' viewBox='0 0 24 24' stroke-width='1.9'><path d="M5 12h14"/><path d="M12 5v14"/></svg>
<svg class='i' style='left:2217.0px;top:739.0px;width:32px;height:32px;color:#C9CED6;' viewBox='0 0 24 24' stroke-width='1.9'><path d="M5 12h14"/><path d="M12 5v14"/></svg>
<svg class='i' style='left:2297.0px;top:739.0px;width:32px;height:32px;color:#C9CED6;' viewBox='0 0 24 24' stroke-width='1.9'><path d="M5 12h14"/><path d="M12 5v14"/></svg>
<svg class='i' style='left:2377.0px;top:739.0px;width:32px;height:32px;color:#C9CED6;' viewBox='0 0 24 24' stroke-width='1.9'><path d="M5 12h14"/><path d="M12 5v14"/></svg>
<svg class='i' style='left:2457.0px;top:739.0px;width:32px;height:32px;color:#C9CED6;' viewBox='0 0 24 24' stroke-width='1.9'><path d="M5 12h14"/><path d="M12 5v14"/></svg>
<svg class='i' style='left:2537.0px;top:739.0px;width:32px;height:32px;color:#C9CED6;' viewBox='0 0 24 24' stroke-width='1.9'><path d="M5 12h14"/><path d="M12 5v14"/></svg>
<svg class='i' style='left:2617.0px;top:739.0px;width:32px;height:32px;color:#C9CED6;' viewBox='0 0 24 24' stroke-width='1.9'><path d="M5 12h14"/><path d="M12 5v14"/></svg>
<svg class='i' style='left:2857.0px;top:739.0px;width:32px;height:32px;color:#C9CED6;' viewBox='0 0 24 24' stroke-width='1.9'><path d="M5 12h14"/><path d="M12 5v14"/></svg>
<svg class='i' style='left:2937.0px;top:739.0px;width:32px;height:32px;color:#C9CED6;' viewBox='0 0 24 24' stroke-width='1.9'><path d="M5 12h14"/><path d="M12 5v14"/></svg>
<svg class='i' style='left:3017.0px;top:739.0px;width:32px;height:32px;color:#C9CED6;' viewBox='0 0 24 24' stroke-width='1.9'><path d="M5 12h14"/><path d="M12 5v14"/></svg>
<svg class='i' style='left:3097.0px;top:739.0px;width:32px;height:32px;color:#C9CED6;' viewBox='0 0 24 24' stroke-width='1.9'><path d="M5 12h14"/><path d="M12 5v14"/></svg>
<svg class='i' style='left:3177.0px;top:739.0px;width:32px;height:32px;color:#C9CED6;' viewBox='0 0 24 24' stroke-width='1.9'><path d="M5 12h14"/><path d="M12 5v14"/></svg>
<svg class='i' style='left:3257.0px;top:739.0px;width:32px;height:32px;color:#C9CED6;' viewBox='0 0 24 24' stroke-width='1.9'><path d="M5 12h14"/><path d="M12 5v14"/></svg>
<svg class='i' style='left:3337.0px;top:739.0px;width:32px;height:32px;color:#C9CED6;' viewBox='0 0 24 24' stroke-width='1.9'><path d="M5 12h14"/><path d="M12 5v14"/></svg>
<svg class='i' style='left:3417.0px;top:739.0px;width:32px;height:32px;color:#C9CED6;' viewBox='0 0 24 24' stroke-width='1.9'><path d="M5 12h14"/><path d="M12 5v14"/></svg>
<div class='t' style='left:690px;top:842.80px;font-size:28px;color:#2B1F18;font-weight:400;letter-spacing:-1.0px;-webkit-text-stroke:0.3px currentColor;'>103</div>
<div class='t' style='left:743px;top:846.18px;font-size:24px;color:#6B7280;font-weight:400;letter-spacing:0.5px;-webkit-text-stroke:0.15px currentColor;'>Deluxe</div>
<div class='a' style='left:690px;top:885px;width:230px;height:43px;border:2px solid #E6DED6;border-radius:22px;background:#fff'></div>
<div class='t' style='left:713.6px;top:895.68px;font-size:24px;color:#2B1F18;font-weight:700;letter-spacing:-0.5px;'>BYLAKE KANDY</div>
<svg class='i' style='left:1097.0px;top:869.0px;width:32px;height:32px;color:#C9CED6;' viewBox='0 0 24 24' stroke-width='1.9'><path d="M5 12h14"/><path d="M12 5v14"/></svg>
<svg class='i' style='left:1177.0px;top:869.0px;width:32px;height:32px;color:#C9CED6;' viewBox='0 0 24 24' stroke-width='1.9'><path d="M5 12h14"/><path d="M12 5v14"/></svg>
<svg class='i' style='left:1257.0px;top:869.0px;width:32px;height:32px;color:#C9CED6;' viewBox='0 0 24 24' stroke-width='1.9'><path d="M5 12h14"/><path d="M12 5v14"/></svg>
<svg class='i' style='left:1337.0px;top:869.0px;width:32px;height:32px;color:#C9CED6;' viewBox='0 0 24 24' stroke-width='1.9'><path d="M5 12h14"/><path d="M12 5v14"/></svg>
<svg class='i' style='left:1417.0px;top:869.0px;width:32px;height:32px;color:#C9CED6;' viewBox='0 0 24 24' stroke-width='1.9'><path d="M5 12h14"/><path d="M12 5v14"/></svg>
<svg class='i' style='left:1497.0px;top:869.0px;width:32px;height:32px;color:#C9CED6;' viewBox='0 0 24 24' stroke-width='1.9'><path d="M5 12h14"/><path d="M12 5v14"/></svg>
<svg class='i' style='left:1577.0px;top:869.0px;width:32px;height:32px;color:#C9CED6;' viewBox='0 0 24 24' stroke-width='1.9'><path d="M5 12h14"/><path d="M12 5v14"/></svg>
<svg class='i' style='left:1657.0px;top:869.0px;width:32px;height:32px;color:#C9CED6;' viewBox='0 0 24 24' stroke-width='1.9'><path d="M5 12h14"/><path d="M12 5v14"/></svg>
<svg class='i' style='left:1737.0px;top:869.0px;width:32px;height:32px;color:#C9CED6;' viewBox='0 0 24 24' stroke-width='1.9'><path d="M5 12h14"/><path d="M12 5v14"/></svg>
<svg class='i' style='left:1817.0px;top:869.0px;width:32px;height:32px;color:#C9CED6;' viewBox='0 0 24 24' stroke-width='1.9'><path d="M5 12h14"/><path d="M12 5v14"/></svg>
<svg class='i' style='left:1897.0px;top:869.0px;width:32px;height:32px;color:#C9CED6;' viewBox='0 0 24 24' stroke-width='1.9'><path d="M5 12h14"/><path d="M12 5v14"/></svg>
<svg class='i' style='left:1977.0px;top:869.0px;width:32px;height:32px;color:#C9CED6;' viewBox='0 0 24 24' stroke-width='1.9'><path d="M5 12h14"/><path d="M12 5v14"/></svg>
<svg class='i' style='left:2057.0px;top:869.0px;width:32px;height:32px;color:#C9CED6;' viewBox='0 0 24 24' stroke-width='1.9'><path d="M5 12h14"/><path d="M12 5v14"/></svg>
<svg class='i' style='left:2137.0px;top:869.0px;width:32px;height:32px;color:#C9CED6;' viewBox='0 0 24 24' stroke-width='1.9'><path d="M5 12h14"/><path d="M12 5v14"/></svg>
<svg class='i' style='left:2217.0px;top:869.0px;width:32px;height:32px;color:#C9CED6;' viewBox='0 0 24 24' stroke-width='1.9'><path d="M5 12h14"/><path d="M12 5v14"/></svg>
<svg class='i' style='left:2297.0px;top:869.0px;width:32px;height:32px;color:#C9CED6;' viewBox='0 0 24 24' stroke-width='1.9'><path d="M5 12h14"/><path d="M12 5v14"/></svg>
<svg class='i' style='left:2377.0px;top:869.0px;width:32px;height:32px;color:#C9CED6;' viewBox='0 0 24 24' stroke-width='1.9'><path d="M5 12h14"/><path d="M12 5v14"/></svg>
<svg class='i' style='left:2457.0px;top:869.0px;width:32px;height:32px;color:#C9CED6;' viewBox='0 0 24 24' stroke-width='1.9'><path d="M5 12h14"/><path d="M12 5v14"/></svg>
<svg class='i' style='left:2537.0px;top:869.0px;width:32px;height:32px;color:#C9CED6;' viewBox='0 0 24 24' stroke-width='1.9'><path d="M5 12h14"/><path d="M12 5v14"/></svg>
<svg class='i' style='left:2617.0px;top:869.0px;width:32px;height:32px;color:#C9CED6;' viewBox='0 0 24 24' stroke-width='1.9'><path d="M5 12h14"/><path d="M12 5v14"/></svg>
<svg class='i' style='left:2697.0px;top:869.0px;width:32px;height:32px;color:#C9CED6;' viewBox='0 0 24 24' stroke-width='1.9'><path d="M5 12h14"/><path d="M12 5v14"/></svg>
<svg class='i' style='left:2777.0px;top:869.0px;width:32px;height:32px;color:#C9CED6;' viewBox='0 0 24 24' stroke-width='1.9'><path d="M5 12h14"/><path d="M12 5v14"/></svg>
<svg class='i' style='left:2857.0px;top:869.0px;width:32px;height:32px;color:#C9CED6;' viewBox='0 0 24 24' stroke-width='1.9'><path d="M5 12h14"/><path d="M12 5v14"/></svg>
<svg class='i' style='left:2937.0px;top:869.0px;width:32px;height:32px;color:#C9CED6;' viewBox='0 0 24 24' stroke-width='1.9'><path d="M5 12h14"/><path d="M12 5v14"/></svg>
<svg class='i' style='left:3017.0px;top:869.0px;width:32px;height:32px;color:#C9CED6;' viewBox='0 0 24 24' stroke-width='1.9'><path d="M5 12h14"/><path d="M12 5v14"/></svg>
<svg class='i' style='left:3097.0px;top:869.0px;width:32px;height:32px;color:#C9CED6;' viewBox='0 0 24 24' stroke-width='1.9'><path d="M5 12h14"/><path d="M12 5v14"/></svg>
<svg class='i' style='left:3177.0px;top:869.0px;width:32px;height:32px;color:#C9CED6;' viewBox='0 0 24 24' stroke-width='1.9'><path d="M5 12h14"/><path d="M12 5v14"/></svg>
<svg class='i' style='left:3257.0px;top:869.0px;width:32px;height:32px;color:#C9CED6;' viewBox='0 0 24 24' stroke-width='1.9'><path d="M5 12h14"/><path d="M12 5v14"/></svg>
<svg class='i' style='left:3337.0px;top:869.0px;width:32px;height:32px;color:#C9CED6;' viewBox='0 0 24 24' stroke-width='1.9'><path d="M5 12h14"/><path d="M12 5v14"/></svg>
<svg class='i' style='left:3417.0px;top:869.0px;width:32px;height:32px;color:#C9CED6;' viewBox='0 0 24 24' stroke-width='1.9'><path d="M5 12h14"/><path d="M12 5v14"/></svg>
<div class='t' style='left:690px;top:972.80px;font-size:28px;color:#2B1F18;font-weight:400;letter-spacing:-1.0px;-webkit-text-stroke:0.3px currentColor;'>104</div>
<div class='t' style='left:743px;top:976.18px;font-size:24px;color:#6B7280;font-weight:400;letter-spacing:0.5px;-webkit-text-stroke:0.15px currentColor;'>Deluxe</div>
<div class='a' style='left:690px;top:1015px;width:230px;height:43px;border:2px solid #E6DED6;border-radius:22px;background:#fff'></div>
<div class='t' style='left:713.6px;top:1025.68px;font-size:24px;color:#2B1F18;font-weight:700;letter-spacing:-0.5px;'>BYLAKE KANDY</div>
<svg class='i' style='left:1097.0px;top:999.0px;width:32px;height:32px;color:#C9CED6;' viewBox='0 0 24 24' stroke-width='1.9'><path d="M5 12h14"/><path d="M12 5v14"/></svg>
<svg class='i' style='left:1177.0px;top:999.0px;width:32px;height:32px;color:#C9CED6;' viewBox='0 0 24 24' stroke-width='1.9'><path d="M5 12h14"/><path d="M12 5v14"/></svg>
<svg class='i' style='left:1257.0px;top:999.0px;width:32px;height:32px;color:#C9CED6;' viewBox='0 0 24 24' stroke-width='1.9'><path d="M5 12h14"/><path d="M12 5v14"/></svg>
<svg class='i' style='left:1337.0px;top:999.0px;width:32px;height:32px;color:#C9CED6;' viewBox='0 0 24 24' stroke-width='1.9'><path d="M5 12h14"/><path d="M12 5v14"/></svg>
<svg class='i' style='left:1417.0px;top:999.0px;width:32px;height:32px;color:#C9CED6;' viewBox='0 0 24 24' stroke-width='1.9'><path d="M5 12h14"/><path d="M12 5v14"/></svg>
<svg class='i' style='left:1497.0px;top:999.0px;width:32px;height:32px;color:#C9CED6;' viewBox='0 0 24 24' stroke-width='1.9'><path d="M5 12h14"/><path d="M12 5v14"/></svg>
<svg class='i' style='left:1577.0px;top:999.0px;width:32px;height:32px;color:#C9CED6;' viewBox='0 0 24 24' stroke-width='1.9'><path d="M5 12h14"/><path d="M12 5v14"/></svg>
<svg class='i' style='left:1657.0px;top:999.0px;width:32px;height:32px;color:#C9CED6;' viewBox='0 0 24 24' stroke-width='1.9'><path d="M5 12h14"/><path d="M12 5v14"/></svg>
<svg class='i' style='left:1737.0px;top:999.0px;width:32px;height:32px;color:#C9CED6;' viewBox='0 0 24 24' stroke-width='1.9'><path d="M5 12h14"/><path d="M12 5v14"/></svg>
<svg class='i' style='left:1817.0px;top:999.0px;width:32px;height:32px;color:#C9CED6;' viewBox='0 0 24 24' stroke-width='1.9'><path d="M5 12h14"/><path d="M12 5v14"/></svg>
<svg class='i' style='left:1897.0px;top:999.0px;width:32px;height:32px;color:#C9CED6;' viewBox='0 0 24 24' stroke-width='1.9'><path d="M5 12h14"/><path d="M12 5v14"/></svg>
<svg class='i' style='left:1977.0px;top:999.0px;width:32px;height:32px;color:#C9CED6;' viewBox='0 0 24 24' stroke-width='1.9'><path d="M5 12h14"/><path d="M12 5v14"/></svg>
<svg class='i' style='left:2057.0px;top:999.0px;width:32px;height:32px;color:#C9CED6;' viewBox='0 0 24 24' stroke-width='1.9'><path d="M5 12h14"/><path d="M12 5v14"/></svg>
<svg class='i' style='left:2137.0px;top:999.0px;width:32px;height:32px;color:#C9CED6;' viewBox='0 0 24 24' stroke-width='1.9'><path d="M5 12h14"/><path d="M12 5v14"/></svg>
<svg class='i' style='left:2217.0px;top:999.0px;width:32px;height:32px;color:#C9CED6;' viewBox='0 0 24 24' stroke-width='1.9'><path d="M5 12h14"/><path d="M12 5v14"/></svg>
<svg class='i' style='left:2297.0px;top:999.0px;width:32px;height:32px;color:#C9CED6;' viewBox='0 0 24 24' stroke-width='1.9'><path d="M5 12h14"/><path d="M12 5v14"/></svg>
<svg class='i' style='left:2377.0px;top:999.0px;width:32px;height:32px;color:#C9CED6;' viewBox='0 0 24 24' stroke-width='1.9'><path d="M5 12h14"/><path d="M12 5v14"/></svg>
<svg class='i' style='left:2457.0px;top:999.0px;width:32px;height:32px;color:#C9CED6;' viewBox='0 0 24 24' stroke-width='1.9'><path d="M5 12h14"/><path d="M12 5v14"/></svg>
<svg class='i' style='left:2537.0px;top:999.0px;width:32px;height:32px;color:#C9CED6;' viewBox='0 0 24 24' stroke-width='1.9'><path d="M5 12h14"/><path d="M12 5v14"/></svg>
<svg class='i' style='left:2617.0px;top:999.0px;width:32px;height:32px;color:#C9CED6;' viewBox='0 0 24 24' stroke-width='1.9'><path d="M5 12h14"/><path d="M12 5v14"/></svg>
<svg class='i' style='left:2697.0px;top:999.0px;width:32px;height:32px;color:#C9CED6;' viewBox='0 0 24 24' stroke-width='1.9'><path d="M5 12h14"/><path d="M12 5v14"/></svg>
<svg class='i' style='left:2777.0px;top:999.0px;width:32px;height:32px;color:#C9CED6;' viewBox='0 0 24 24' stroke-width='1.9'><path d="M5 12h14"/><path d="M12 5v14"/></svg>
<svg class='i' style='left:2857.0px;top:999.0px;width:32px;height:32px;color:#C9CED6;' viewBox='0 0 24 24' stroke-width='1.9'><path d="M5 12h14"/><path d="M12 5v14"/></svg>
<svg class='i' style='left:2937.0px;top:999.0px;width:32px;height:32px;color:#C9CED6;' viewBox='0 0 24 24' stroke-width='1.9'><path d="M5 12h14"/><path d="M12 5v14"/></svg>
<svg class='i' style='left:3017.0px;top:999.0px;width:32px;height:32px;color:#C9CED6;' viewBox='0 0 24 24' stroke-width='1.9'><path d="M5 12h14"/><path d="M12 5v14"/></svg>
<svg class='i' style='left:3097.0px;top:999.0px;width:32px;height:32px;color:#C9CED6;' viewBox='0 0 24 24' stroke-width='1.9'><path d="M5 12h14"/><path d="M12 5v14"/></svg>
<svg class='i' style='left:3177.0px;top:999.0px;width:32px;height:32px;color:#C9CED6;' viewBox='0 0 24 24' stroke-width='1.9'><path d="M5 12h14"/><path d="M12 5v14"/></svg>
<svg class='i' style='left:3257.0px;top:999.0px;width:32px;height:32px;color:#C9CED6;' viewBox='0 0 24 24' stroke-width='1.9'><path d="M5 12h14"/><path d="M12 5v14"/></svg>
<svg class='i' style='left:3337.0px;top:999.0px;width:32px;height:32px;color:#C9CED6;' viewBox='0 0 24 24' stroke-width='1.9'><path d="M5 12h14"/><path d="M12 5v14"/></svg>
<svg class='i' style='left:3417.0px;top:999.0px;width:32px;height:32px;color:#C9CED6;' viewBox='0 0 24 24' stroke-width='1.9'><path d="M5 12h14"/><path d="M12 5v14"/></svg>
<div class='a' style='left:2594px;top:561px;width:238px;height:128px;border-radius:16px;background:#16A34A;border:2px solid #5DBB7D'></div>
<div class='t' style='left:2612px;top:577.45px;font-size:29px;color:#FFFFFF;font-weight:700;'>#0012 Eranga</div>
<div class='a' style='left:2914px;top:561px;width:158px;height:128px;border-radius:16px;background:#EAB308;border:2px solid #EDC150'></div>
<div class='t' style='left:2932px;top:576.40px;font-size:30px;color:#FFFFFF;font-weight:700;letter-spacing:0.35px;'>#0013 ...</div>
<div class='a' style='left:2674px;top:691px;width:158px;height:128px;border-radius:16px;background:#EAB308;border:2px solid #EDC150'></div>
<div class='t' style='left:2692px;top:706.40px;font-size:30px;color:#FFFFFF;font-weight:700;letter-spacing:0.35px;'>#0014 ...</div>
<div class='a' style='left:706px;top:1119px;width:32px;height:32px;border-radius:7px;background:#22C55E'></div>
<div class='t' style='left:754.5px;top:1122.30px;font-size:28px;color:#2B1F18;font-weight:400;letter-spacing:0.75px;'>Confirmed</div>
<div class='a' style='left:922px;top:1119px;width:32px;height:32px;border-radius:7px;background:#EAB308'></div>
<div class='t' style='left:970.3px;top:1122.30px;font-size:28px;color:#2B1F18;font-weight:400;letter-spacing:0.72px;'>Tentative</div>
<div class='a' style='left:1120.3px;top:1119px;width:32px;height:32px;border-radius:7px;background:#3B82F6'></div>
<div class='t' style='left:1166.3px;top:1122.30px;font-size:28px;color:#2B1F18;font-weight:400;letter-spacing:0.45px;'>Pending</div>
<div class='a' style='left:1304.7px;top:1119px;width:32px;height:32px;border-radius:7px;background:#A855F7'></div>
<div class='t' style='left:1352.8px;top:1122.30px;font-size:28px;color:#2B1F18;font-weight:400;letter-spacing:0.45px;'>Checked In</div>
<div class='a' style='left:1529px;top:1119px;width:32px;height:32px;border-radius:7px;background:#EF4444'></div>
<div class='t' style='left:1577.3px;top:1122.30px;font-size:28px;color:#2B1F18;font-weight:400;letter-spacing:0.5px;'>Cancelled</div>
</body></html>
